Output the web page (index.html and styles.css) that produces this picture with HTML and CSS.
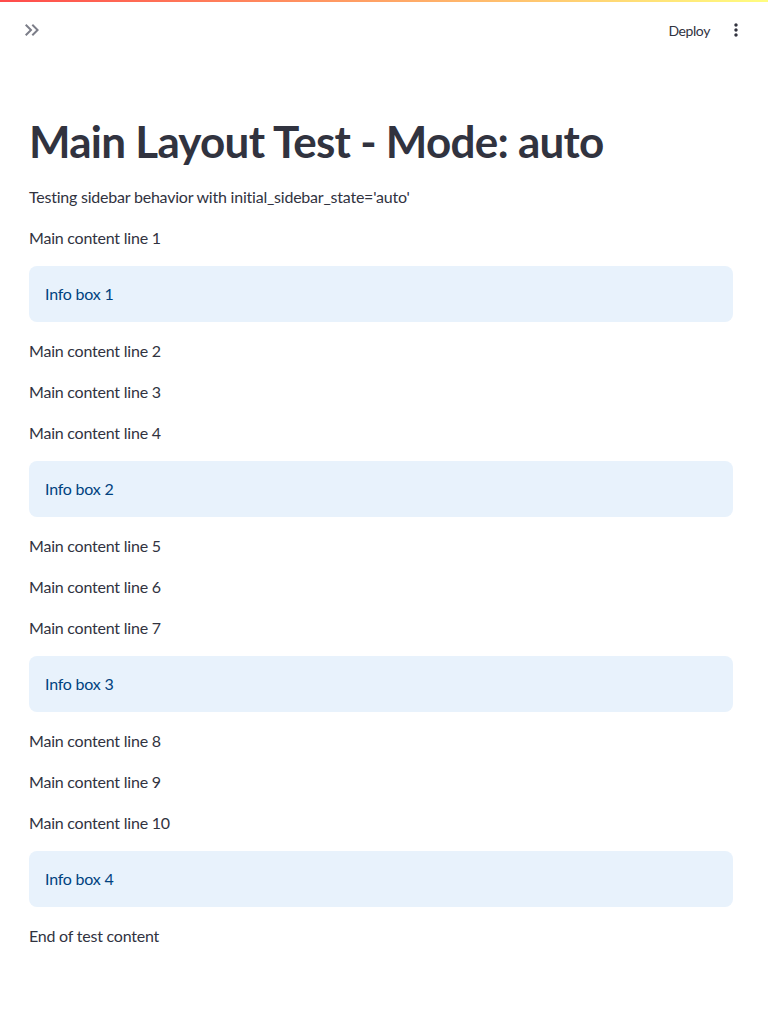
FILE: index.html
```html
<!DOCTYPE html>
<html>
<head>
<meta charset="utf-8">
<link rel="stylesheet" href="styles.css">
</head>
<body>
<div class="decoration"></div>
<header class="topbar">
  <button class="icon-btn expand" aria-label="Expand sidebar">
    <svg width="24" height="24" viewBox="0 0 24 24" fill="#7c7e89"><path d="M6.41 6L5 7.41 9.58 12 5 16.59 6.41 18l6-6-6-6zM13 6l-1.41 1.41L16.17 12l-4.58 4.59L13 18l6-6-6-6z"/></svg>
  </button>
  <div class="actions">
    <span class="deploy">Deploy</span>
    <button class="icon-btn menu" aria-label="Main menu">
      <svg width="20" height="20" viewBox="0 0 24 24" fill="#31333f"><path d="M12 8c1.1 0 2-.9 2-2s-.9-2-2-2-2 .9-2 2 .9 2 2 2zm0 2c-1.1 0-2 .9-2 2s.9 2 2 2 2-.9 2-2-.9-2-2-2zm0 6c-1.1 0-2 .9-2 2s.9 2 2 2 2-.9 2-2-.9-2-2-2z"/></svg>
    </button>
  </div>
</header>
<main class="main">
  <h1 class="title">Main Layout Test - Mode: auto</h1>
  <p class="text">Testing sidebar behavior with initial_sidebar_state='auto'</p>
  <p class="text">Main content line 1</p>
  <div class="info">Info box 1</div>
  <p class="text">Main content line 2</p>
  <p class="text">Main content line 3</p>
  <p class="text">Main content line 4</p>
  <div class="info">Info box 2</div>
  <p class="text">Main content line 5</p>
  <p class="text">Main content line 6</p>
  <p class="text">Main content line 7</p>
  <div class="info">Info box 3</div>
  <p class="text">Main content line 8</p>
  <p class="text">Main content line 9</p>
  <p class="text">Main content line 10</p>
  <div class="info">Info box 4</div>
  <p class="text">End of test content</p>
</main>
</body>
</html>
```
FILE: styles.css
```css
html, body {
  margin: 0;
  padding: 0;
  background: #ffffff;
  color: #31333f;
  font-family: "Lato", "Noto Sans", sans-serif;
}
.decoration {
  height: 2px;
  background: linear-gradient(90deg, #ff4b4b, #fffd80);
}
.topbar {
  height: 56px;
  display: flex;
  align-items: center;
  justify-content: space-between;
  padding: 0 22px 0 20px;
}
.icon-btn {
  border: 0;
  background: none;
  padding: 0;
  display: flex;
  align-items: center;
  justify-content: center;
  cursor: pointer;
}
.actions {
  display: flex;
  align-items: center;
  gap: 16px;
}
.deploy {
  font-size: 14px;
  letter-spacing: -0.4px;
  color: #31333f;
}
.main {
  padding: 57px 35px 60px 29px;
  display: flex;
  flex-direction: column;
  gap: 16px;
}
.title {
  margin: 0;
  font-size: 44px;
  line-height: 52.8px;
  font-weight: 700;
  letter-spacing: -0.75px;
  color: #31333f;
}
.text {
  margin: 0;
  font-size: 16px;
  line-height: 25px;
  letter-spacing: -0.22px;
}
.info {
  height: 56px;
  box-sizing: border-box;
  padding: 0 16px;
  display: flex;
  align-items: center;
  background: #e8f2fc;
  border-radius: 8px;
  color: #004280;
  font-size: 16px;
  letter-spacing: -0.22px;
}
```
